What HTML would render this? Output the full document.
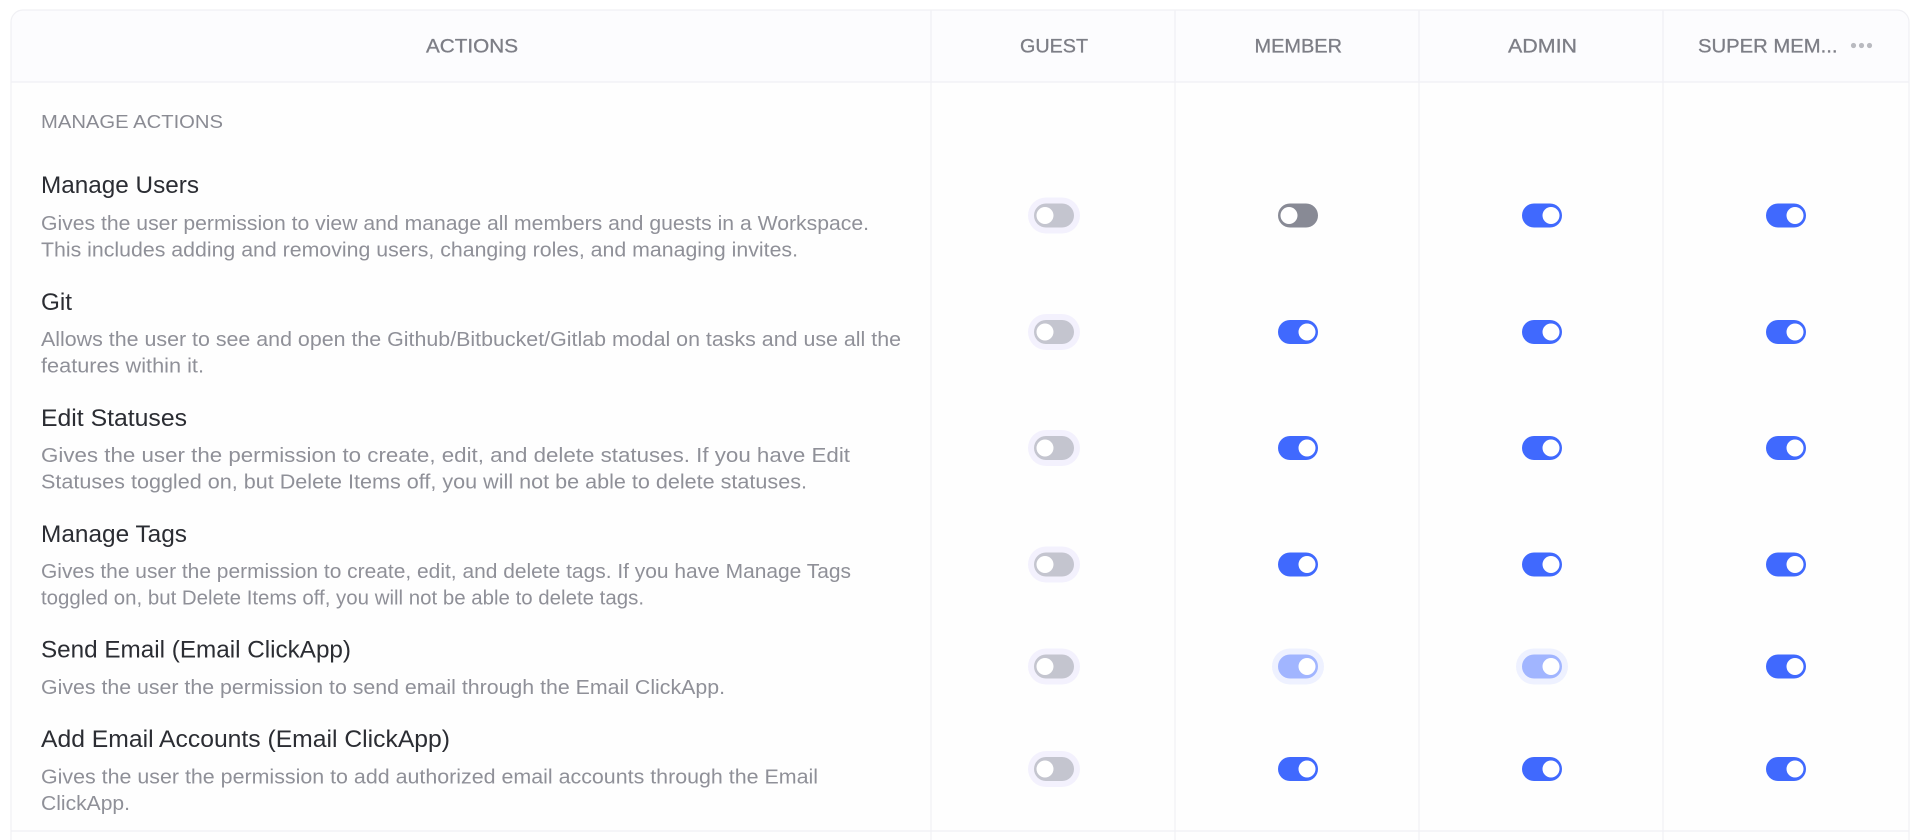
<!DOCTYPE html>
<html>
<head>
<meta charset="utf-8">
<style>
html,body{margin:0;padding:0;background:#fff;width:1920px;height:840px;overflow:hidden}
svg{display:block;filter:blur(.35px)}
text{font-family:"Liberation Sans",sans-serif}
.h{font-size:19px;fill:#7d7e86;stroke:#7d7e86;stroke-width:.3}
.s{font-size:18.5px;fill:#8a8b93}
.t{font-size:24px;fill:#2b2d33}
.d{font-size:20px;fill:#8f9098}
.l{stroke:#f0f0f4;stroke-width:1.2;fill:none}
</style>
</head>
<body>
<svg width="1920" height="840" viewBox="0 0 1920 840" xmlns="http://www.w3.org/2000/svg">
<defs>
<g id="on"><rect x="-20" y="-12" width="40" height="24" rx="12" fill="#4069fe"/><circle cx="9" cy="0" r="8.5" fill="#fff"/></g>
<g id="dark"><rect x="-20" y="-12" width="40" height="24" rx="12" fill="#888a95"/><circle cx="-9" cy="0" r="8.5" fill="#fff"/></g>
<g id="off"><rect x="-26" y="-18" width="52" height="36" rx="18" fill="#f3f1fd"/><rect x="-20" y="-12" width="40" height="24" rx="12" fill="#c4c5cf"/><circle cx="-9" cy="0" r="8.5" fill="#fff"/></g>
<g id="semi"><rect x="-26" y="-18" width="52" height="36" rx="18" fill="#eef1ff"/><rect x="-20" y="-12" width="40" height="24" rx="12" fill="#a1b5ff"/><circle cx="9" cy="0" r="8.5" fill="#fff"/></g>
</defs>

<path d="M11 840V22a12 12 0 0 1 12-12H1897a12 12 0 0 1 12 12V840Z" fill="#fefefe"/>
<path d="M11 82V22a12 12 0 0 1 12-12H1897a12 12 0 0 1 12 12V82Z" fill="#fcfcfe"/>
<path class="l" d="M11 840V22a12 12 0 0 1 12-12H1897a12 12 0 0 1 12 12V840"/>
<path class="l" d="M11 82H1909M11 831H1909M931 10V840M1175 10V840M1419 10V840M1663 10V840"/>

<text class="h" x="426" y="52.5" textLength="92" lengthAdjust="spacingAndGlyphs">ACTIONS</text>
<text class="h" x="1020" y="52.5" textLength="68" lengthAdjust="spacingAndGlyphs">GUEST</text>
<text class="h" x="1254.5" y="52.5" textLength="87.5" lengthAdjust="spacingAndGlyphs">MEMBER</text>
<text class="h" x="1508" y="52.5" textLength="69" lengthAdjust="spacingAndGlyphs">ADMIN</text>
<text class="h" x="1698" y="52.5" textLength="139.5" lengthAdjust="spacingAndGlyphs">SUPER MEM...</text>
<circle cx="1853.5" cy="45.5" r="2.6" fill="#b9bac0"/><circle cx="1861.5" cy="45.5" r="2.6" fill="#b9bac0"/><circle cx="1869.5" cy="45.5" r="2.6" fill="#b9bac0"/>

<text class="s" x="41" y="128" textLength="182" lengthAdjust="spacingAndGlyphs">MANAGE ACTIONS</text>

<text class="t" x="41" y="193" textLength="158" lengthAdjust="spacingAndGlyphs">Manage Users</text>
<text class="d" x="41" y="230" textLength="828" lengthAdjust="spacingAndGlyphs">Gives the user permission to view and manage all members and guests in a Workspace.</text>
<text class="d" x="41" y="256.5" textLength="757" lengthAdjust="spacingAndGlyphs">This includes adding and removing users, changing roles, and managing invites.</text>

<text class="t" x="41" y="310" textLength="31" lengthAdjust="spacingAndGlyphs">Git</text>
<text class="d" x="41" y="346" textLength="860" lengthAdjust="spacingAndGlyphs">Allows the user to see and open the Github/Bitbucket/Gitlab modal on tasks and use all the</text>
<text class="d" x="41" y="372.5" textLength="163" lengthAdjust="spacingAndGlyphs">features within it.</text>

<text class="t" x="41" y="426" textLength="146" lengthAdjust="spacingAndGlyphs">Edit Statuses</text>
<text class="d" x="41" y="462" textLength="809" lengthAdjust="spacingAndGlyphs">Gives the user the permission to create, edit, and delete statuses. If you have Edit</text>
<text class="d" x="41" y="488.5" textLength="766" lengthAdjust="spacingAndGlyphs">Statuses toggled on, but Delete Items off, you will not be able to delete statuses.</text>

<text class="t" x="41" y="542" textLength="146" lengthAdjust="spacingAndGlyphs">Manage Tags</text>
<text class="d" x="41" y="578" textLength="810" lengthAdjust="spacingAndGlyphs">Gives the user the permission to create, edit, and delete tags. If you have Manage Tags</text>
<text class="d" x="41" y="604.5" textLength="603" lengthAdjust="spacingAndGlyphs">toggled on, but Delete Items off, you will not be able to delete tags.</text>

<text class="t" x="41" y="657.5" textLength="310" lengthAdjust="spacingAndGlyphs">Send Email (Email ClickApp)</text>
<text class="d" x="41" y="694" textLength="684" lengthAdjust="spacingAndGlyphs">Gives the user the permission to send email through the Email ClickApp.</text>

<text class="t" x="41" y="747" textLength="409" lengthAdjust="spacingAndGlyphs">Add Email Accounts (Email ClickApp)</text>
<text class="d" x="41" y="783.5" textLength="777" lengthAdjust="spacingAndGlyphs">Gives the user the permission to add authorized email accounts through the Email</text>
<text class="d" x="41" y="810" textLength="89" lengthAdjust="spacingAndGlyphs">ClickApp.</text>

<use href="#off" x="1054" y="215.5"/><use href="#dark" x="1298" y="215.5"/><use href="#on" x="1542" y="215.5"/><use href="#on" x="1786" y="215.5"/>
<use href="#off" x="1054" y="332"/><use href="#on" x="1298" y="332"/><use href="#on" x="1542" y="332"/><use href="#on" x="1786" y="332"/>
<use href="#off" x="1054" y="448"/><use href="#on" x="1298" y="448"/><use href="#on" x="1542" y="448"/><use href="#on" x="1786" y="448"/>
<use href="#off" x="1054" y="564.5"/><use href="#on" x="1298" y="564.5"/><use href="#on" x="1542" y="564.5"/><use href="#on" x="1786" y="564.5"/>
<use href="#off" x="1054" y="666.5"/><use href="#semi" x="1298" y="666.5"/><use href="#semi" x="1542" y="666.5"/><use href="#on" x="1786" y="666.5"/>
<use href="#off" x="1054" y="769"/><use href="#on" x="1298" y="769"/><use href="#on" x="1542" y="769"/><use href="#on" x="1786" y="769"/>
</svg>
</body>
</html>
